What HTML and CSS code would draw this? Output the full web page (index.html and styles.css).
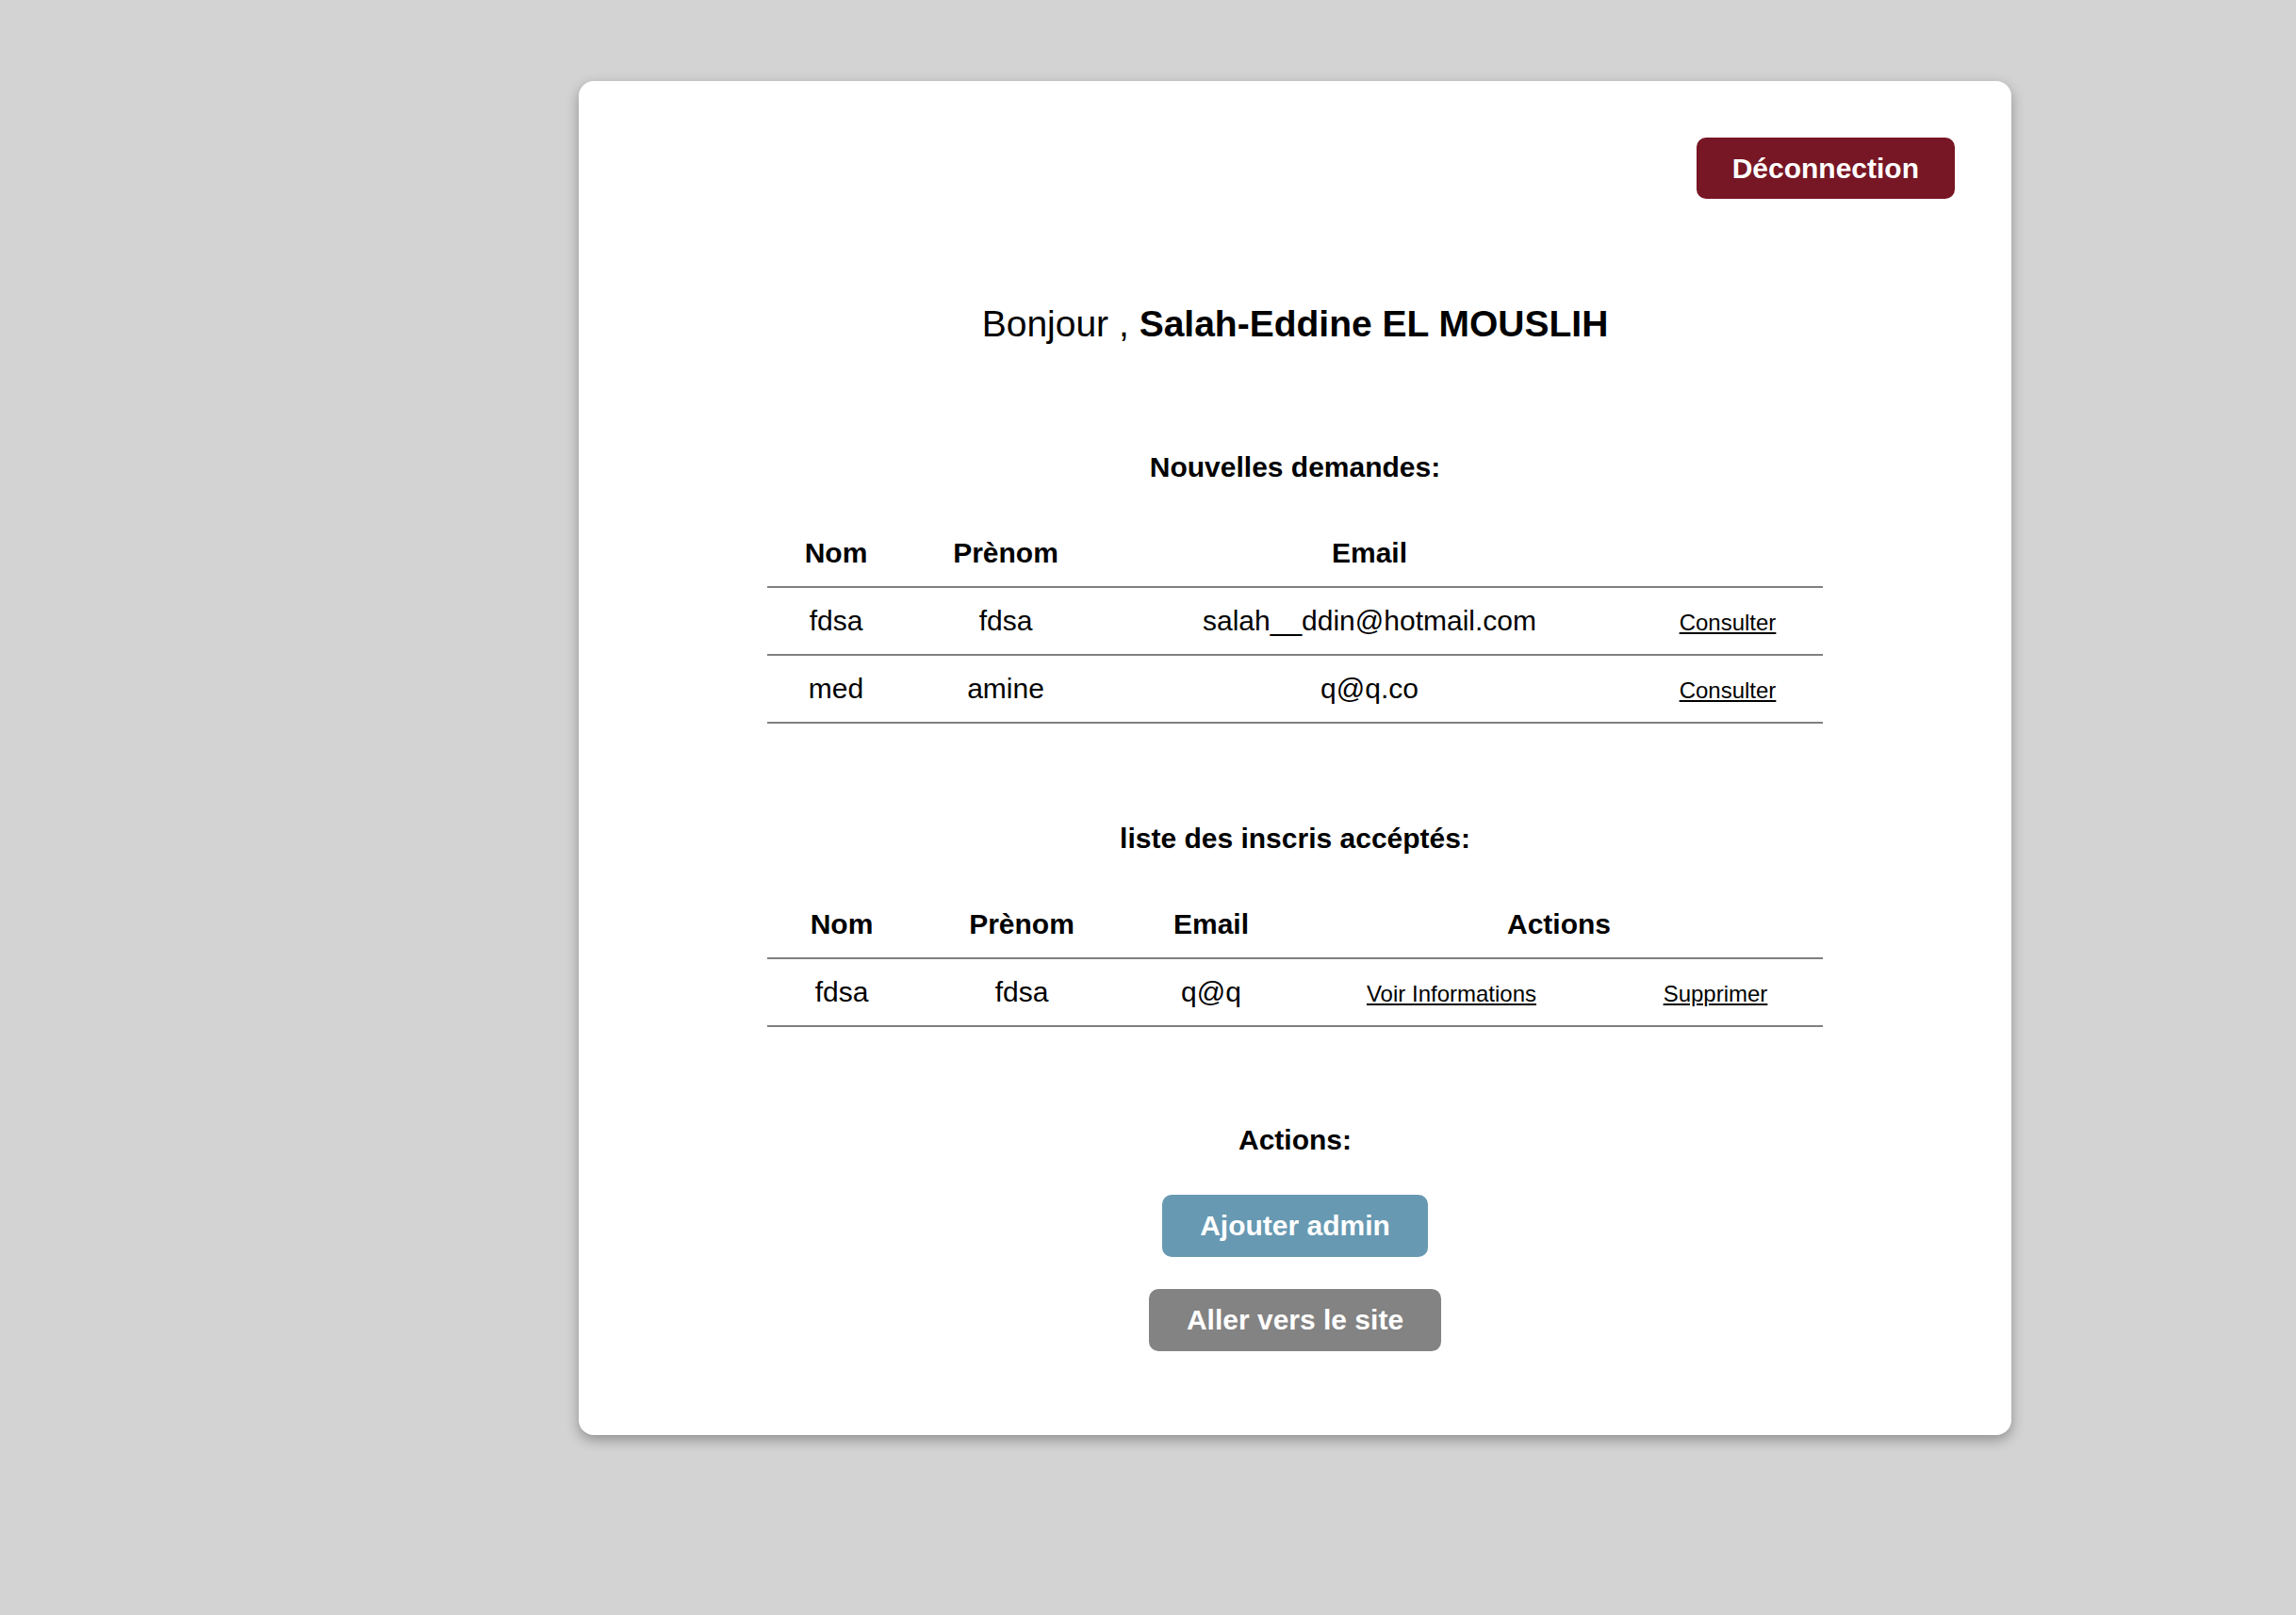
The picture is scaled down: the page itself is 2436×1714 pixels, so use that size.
FILE: index.html
```html
<!DOCTYPE html>
<html lang="fr">
<head>
<meta charset="utf-8">
<title>Administration</title>
<link rel="stylesheet" href="styles.css">
</head>
<body>
<main class="card">
  <div class="topbar">
    <a class="btn btn-logout" href="#">Déconnection</a>
  </div>

  <h1 class="greeting">Bonjour , <strong>Salah-Eddine EL MOUSLIH</strong></h1>

  <h2 class="section-title first">Nouvelles demandes:</h2>
  <table class="grid">
    <colgroup>
      <col class="c1-nom">
      <col class="c1-prenom">
      <col class="c1-email">
      <col class="c1-act">
    </colgroup>
    <thead>
      <tr><th>Nom</th><th>Prènom</th><th>Email</th><th></th></tr>
    </thead>
    <tbody>
      <tr><td>fdsa</td><td>fdsa</td><td>salah__ddin@hotmail.com</td><td><a class="link" href="#">Consulter</a></td></tr>
      <tr><td>med</td><td>amine</td><td>q@q.co</td><td><a class="link" href="#">Consulter</a></td></tr>
    </tbody>
  </table>

  <h2 class="section-title second">liste des inscris accéptés:</h2>
  <table class="grid">
    <colgroup>
      <col class="c2-nom">
      <col class="c2-prenom">
      <col class="c2-email">
      <col class="c2-info">
      <col class="c2-del">
    </colgroup>
    <thead>
      <tr><th>Nom</th><th>Prènom</th><th>Email</th><th colspan="2">Actions</th></tr>
    </thead>
    <tbody>
      <tr><td>fdsa</td><td>fdsa</td><td>q@q</td><td><a class="link" href="#">Voir Informations</a></td><td><a class="link" href="#">Supprimer</a></td></tr>
    </tbody>
  </table>

  <h2 class="section-title">Actions:</h2>
  <div class="actions">
    <a class="btn btn-admin" href="#">Ajouter admin</a>
    <a class="btn btn-site" href="#">Aller vers le site</a>
  </div>
</main>
</body>
</html>
```
FILE: styles.css
```css
* {
  box-sizing: border-box;
}

html, body {
  margin: 0;
  padding: 0;
}

body {
  background: #d3d3d3;
  font-family: "Liberation Sans", Arial, Helvetica, sans-serif;
  color: #000;
  min-height: 1714px;
  padding-top: 86px;
}

.card {
  margin-left: 614px;
  width: 1520px;
  background: #fff;
  border-radius: 16px;
  box-shadow: 0 5px 14px rgba(0, 0, 0, 0.32);
  padding: 60px 60px 89px;
  display: flex;
  flex-direction: column;
  align-items: center;
}

.topbar {
  align-self: stretch;
  display: flex;
  justify-content: flex-end;
}

.btn {
  display: inline-block;
  font-size: 30px;
  font-weight: bold;
  line-height: 34px;
  color: #fff;
  text-decoration: none;
  border-radius: 10px;
  padding: 16px 40px;
}

.btn-logout {
  background: #771624;
  padding: 16px 38px 15px;
}

.greeting {
  margin: 110px 0 0;
  font-size: 39px;
  line-height: 46px;
  font-weight: normal;
}

.greeting strong {
  font-weight: bold;
}

.section-title {
  margin: 102px 0 0;
  font-size: 30px;
  line-height: 35px;
  font-weight: bold;
}

.section-title.first {
  margin-top: 111px;
}

.section-title.second {
  margin-top: 104px;
}

.grid {
  margin-top: 38px;
  width: 1120px;
  border-collapse: collapse;
  table-layout: fixed;
  font-size: 30px;
}

.grid th,
.grid td {
  padding: 0;
  text-align: center;
  vertical-align: middle;
  border-bottom: 2px solid #808080;
}

.grid th {
  height: 72px;
  font-weight: bold;
}

.grid td {
  height: 72px;
  font-weight: normal;
}

.link {
  font-size: 24px;
  color: #000;
  text-decoration: underline;
}

.c1-nom { width: 146px; }
.c1-prenom { width: 214px; }
.c1-email { width: 558px; }
.c1-act { width: 202px; }

.c2-nom { width: 158px; }
.c2-prenom { width: 224px; }
.c2-email { width: 178px; }
.c2-info { width: 332px; }
.c2-del { width: 228px; }

.actions {
  margin-top: 41px;
  display: flex;
  flex-direction: column;
  align-items: center;
  gap: 34px;
}

.btn-admin {
  background: #6799b2;
}

.btn-site {
  background: #838383;
}
```
